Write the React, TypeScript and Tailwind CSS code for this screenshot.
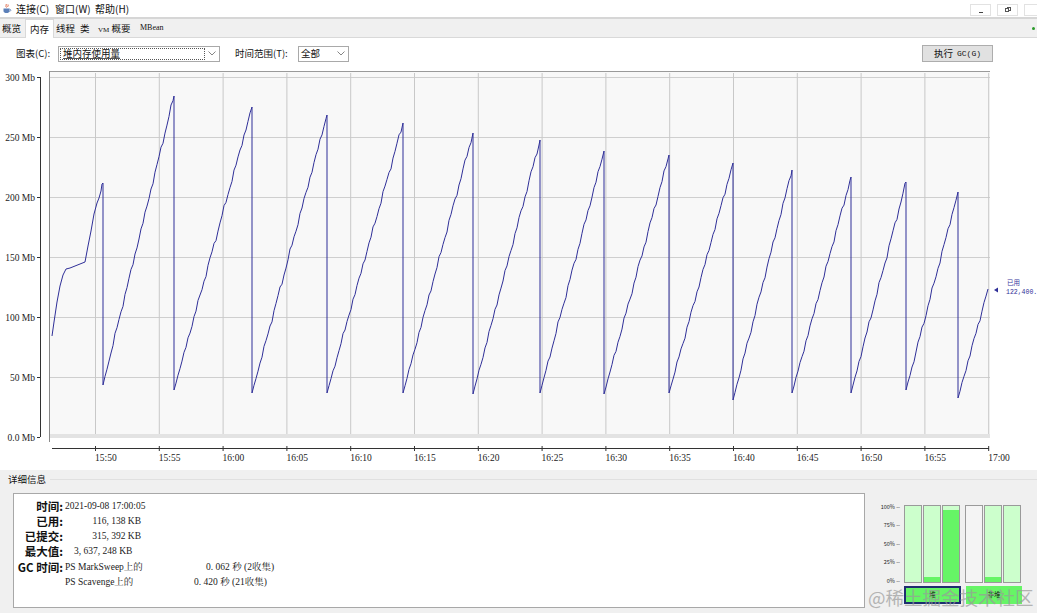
import React from "react";

const cjk = "font-['Noto_Sans_CJK_SC',sans-serif]";
const serif = "font-['Liberation_Serif','Noto_Serif_CJK_SC',serif]";

// chart geometry (page coordinates, svg viewBox starts at y=68)
const GRID_X0 = 95;
const GRID_DX = 63.8;
const times = ["15:50", "15:55", "16:00", "16:05", "16:10", "16:15", "16:20", "16:25", "16:30", "16:35", "16:40", "16:45", "16:50", "16:55", "17:00"];
const yLabels = ["300 Mb", "250 Mb", "200 Mb", "150 Mb", "100 Mb", "50 Mb", "0.0 Mb"];

const firstRise: [number, number][] = [
    [52, 336], [54, 322], [57, 302], [60, 286], [63, 275], [66, 269], [70, 268], [75, 266], [80, 264], [85, 262],
    [88, 246], [91, 231], [94, 214], [97, 203], [99, 198], [101, 191], [102, 184], [103, 183],
];

// [xStart, yLow, xEnd, yPeak]
const cycles = [
    [103, 385, 174, 96],
    [174, 390, 252, 107],
    [252, 393, 327, 115],
    [327, 393, 403, 123],
    [403, 393, 473, 133],
    [473, 394, 540, 140],
    [540, 393, 604, 151],
    [604, 394, 669, 155],
    [669, 393, 733, 163],
    [733, 400, 792, 170],
    [792, 393, 851, 177],
    [851, 393, 906, 182],
    [906, 390, 958, 192],
    [958, 398, 988, 289],
];

function buildPath() {
    const pts: [number, number][] = [...firstRise];
    for (const [xs, yl, xe, yp] of cycles) {
        pts.push([xs, yl]);
        for (let x = xs + 2; x < xe; x += 2) {
            const t = (x - xs) / (xe - xs);
            const n = 1.6 * Math.sin(x * 1.9) + 1.1 * Math.sin(x * 0.47) + 0.6 * Math.sin(x * 3.7);
            pts.push([x, yl - (yl - yp) * t + n * Math.min(1, t * 6)]);
        }
        pts.push([xe, yp]);
    }
    return pts.map(([x, y], i) => `${i === 0 ? "M" : "L"}${x} ${y.toFixed(1)}`).join(" ");
}

function MemoryChart() {
    const path = buildPath();
    return (
        <svg width={1037} height={402} viewBox="0 68 1037 402" className="block">
            {/* plot area */}
            <rect x={49} y={71} width={941} height={367} fill="#f8f8f8" />
            {yLabels.map((_, i) => (
                <line key={i} x1={50} x2={990} y1={77.5 + i * 60} y2={77.5 + i * 60} stroke="#cfcfcf" />
            ))}
            {times.map((_, i) => (
                <line key={i} x1={GRID_X0 + i * GRID_DX + 0.5} x2={GRID_X0 + i * GRID_DX + 0.5} y1={73} y2={437} stroke="#c8c8c8" />
            ))}
            <rect x={50} y={434} width={940} height={4} fill="#e3e3e3" />
            <line x1={49} x2={990} y1={71.5} y2={71.5} stroke="#9a9a9a" />
            <line x1={49.5} x2={49.5} y1={71} y2={442} stroke="#8a8a8a" />

            {/* y axis */}
            <line x1={40.5} x2={40.5} y1={77} y2={437} stroke="#333" />
            {yLabels.map((l, i) => (
                <g key={l}>
                    <line x1={37} x2={40} y1={77.5 + i * 60} y2={77.5 + i * 60} stroke="#333" />
                    <text x={35} y={80.5 + i * 60} textAnchor="end" fontSize={9.5} fill="#222" fontFamily="'Liberation Serif', serif">
                        {l}
                    </text>
                </g>
            ))}

            {/* x axis */}
            <line x1={52} x2={989} y1={448.5} y2={448.5} stroke="#333" />
            {times.map((t, i) => (
                <g key={t}>
                    <line x1={GRID_X0 + i * GRID_DX + 0.5} x2={GRID_X0 + i * GRID_DX + 0.5} y1={446} y2={451} stroke="#333" />
                    <text x={GRID_X0 + i * GRID_DX} y={461} fontSize={9.5} fill="#222" fontFamily="'Liberation Serif', serif">
                        {t}
                    </text>
                </g>
            ))}

            {/* data */}
            <path d={path} fill="none" stroke="#2f2f98" strokeWidth={1} strokeLinejoin="round" />

            {/* current value marker */}
            <polygon points="994,290 998,287.5 998,292.5" fill="#2f2f98" />
            <text x={1007} y={285} fontSize={6.5} fill="#3a3aa0" fontFamily="'Noto Sans CJK SC', sans-serif">
                已用
            </text>
            <text x={1006} y={294} fontSize={6.5} fill="#2f2f98" fontFamily="'Liberation Mono', monospace">
                122,400.
            </text>
        </svg>
    );
}

function JavaIcon() {
    return (
        <svg width="10" height="11" viewBox="0 0 10 11">
            <path d="M4 1 C5 2 3 3 4.5 4.5 M6 1.5 C7 2.5 5 3 6 4" stroke="#d9532c" strokeWidth="0.9" fill="none" />
            <path d="M1.5 5.5 H7.5 V8 C7.5 9.5 6 10 4.5 10 C3 10 1.5 9.5 1.5 8 Z" fill="#5b7fb8" />
            <path d="M7.5 6.2 C9.3 6.2 9.3 8.3 7.3 8.3" stroke="#5b7fb8" strokeWidth="0.8" fill="none" />
        </svg>
    );
}

function MenuBar() {
    return (
        <div className={`h-[17px] flex items-center bg-white text-[10px] text-[#111] ${cjk}`}>
            <div className="w-[16px] pl-[2px] flex items-center">
                <JavaIcon />
            </div>
            <span className="w-[39px]">连接(C)</span>
            <span className="w-[40px]">窗口(W)</span>
            <span>帮助(H)</span>
            <div className="ml-auto flex items-center gap-[6px] mr-[-8px] mt-[2px]">
                <div className="w-[21px] h-[12px] border border-[#e2e2e2] flex items-end justify-center pb-[2px]">
                    <div className="w-[4px] h-[1px] bg-[#444]" />
                </div>
                <div className="w-[21px] h-[12px] border border-[#e2e2e2] flex items-center justify-center">
                    <div className="relative w-[6px] h-[5px]">
                        <div className="absolute right-0 top-0 w-[4px] h-[4px] border border-[#555]" />
                        <div className="absolute left-0 bottom-0 w-[4px] h-[4px] border border-[#555] bg-white" />
                    </div>
                </div>
                <div className="w-[21px] h-[12px] border border-[#e2e2e2]" />
            </div>
        </div>
    );
}

function TabStrip() {
    const tabs = [
        { label: "概览", w: "w-[25px]", pl: "pl-[2px]" },
        { label: "内存", w: "w-[29px]", pl: "pl-[4px]", active: true },
        { label: "线程", w: "w-[26px]", pl: "pl-[2px]" },
        { label: "类", w: "w-[18px]", pl: "pl-[0px]" },
        { label: "VM 概要", w: "w-[41px]", pl: "pl-[0px]" },
        { label: "MBean", w: "w-[34px]", pl: "pl-[1px]" },
    ];
    return (
        <div className="border-t-2 border-[#d6d6d6]">
            <div className={`h-[19px] flex items-end bg-[#f0f0f0] border-b border-[#d9d9d9] text-[9.5px] text-[#111] ${cjk} relative`}>
                {tabs.map((t) => (
                    <div
                        key={t.label}
                        className={`${t.w} ${t.pl} h-[18px] flex items-center ${t.active ? "bg-white border border-b-0 border-[#d9d9d9] mb-[-1px] h-[19px]" : ""}`}
                    >
                        {t.label === "VM 概要" ? (
                            <span>
                                <span className="text-[7px] font-['Liberation_Serif',serif]">VM</span> 概要
                            </span>
                        ) : t.label === "MBean" ? (
                            <span className="text-[8px] font-['Liberation_Serif',serif]">MBean</span>
                        ) : (
                            t.label
                        )}
                    </div>
                ))}
                <div className="ml-auto mr-[2px] mb-[7px] w-[3px] h-[3px] rounded-full bg-[#2a9a2a]" />
            </div>
        </div>
    );
}

function Chevron() {
    return (
        <svg width="8" height="5" viewBox="0 0 8 5">
            <path d="M0.5 0.5 L4 4 L7.5 0.5" stroke="#777" fill="none" strokeWidth="0.9" />
        </svg>
    );
}

function Toolbar() {
    return (
        <div className={`h-[30px] flex items-center bg-white text-[9.5px] text-[#111] ${cjk} pt-[1px]`}>
            <span className="ml-[16px] w-[42px]">图表(C):</span>
            <div className="w-[162px] h-[16px] border border-[#a9a9a9] flex items-center pl-[1px]">
                <div className="w-[145px] h-[12px] border border-dotted border-[#555] flex items-center pl-[2px]">
                    <span className="underline decoration-[#555]">堆内存使用量</span>
                </div>
                <div className="ml-auto mr-[3px] flex items-center">
                    <Chevron />
                </div>
            </div>
            <span className="ml-[15px] w-[63px]">时间范围(T):</span>
            <div className="w-[51px] h-[16px] border border-[#a9a9a9] flex items-center pl-[2px]">
                <span>全部</span>
                <div className="ml-auto mr-[3px] flex items-center">
                    <Chevron />
                </div>
            </div>
            <button className="ml-auto mr-[44px] w-[71px] h-[17px] bg-[#e1e1e1] border border-[#adadad] flex items-center justify-center gap-[4px] text-[9.5px]">
                <span>执行</span>
                <span className="font-['Liberation_Mono',monospace] text-[8px]">GC(G)</span>
            </button>
        </div>
    );
}

function DetailRow({ label, children }: { label: string; children?: React.ReactNode }) {
    return (
        <div className="h-[15.2px] flex items-center">
            <div className={`w-[48px] text-right text-[11.5px] font-bold leading-none text-[#111] ${cjk}`}>{label}</div>
            <div className={`pl-[2px] flex items-center text-[9.5px] leading-none text-[#222] ${serif}`}>{children}</div>
        </div>
    );
}

function HeapBars() {
    const bars = [
        { bg: "bg-[#ccffcc]", fill: "h-[0%]" },
        { bg: "bg-[#ccffcc]", fill: "h-[6%]" },
        { bg: "bg-[#ccffcc]", fill: "h-[95%]" },
        { bg: "bg-[#f4f4f4]", fill: "h-[0%]" },
        { bg: "bg-[#ccffcc]", fill: "h-[6%]" },
        { bg: "bg-[#ccffcc]", fill: "h-[0%]" },
    ];
    const ticks = ["100%", "75%", "50%", "25%", "0%"];
    return (
        <div className="relative ml-[5px] mt-[12px] flex">
            <div className={`w-[34px] h-[79px] flex flex-col justify-between text-[5.5px] text-[#222] ${cjk}`}>
                {ticks.map((t) => (
                    <div key={t} className="flex justify-end pr-[4px] leading-none">
                        {t} --
                    </div>
                ))}
            </div>
            <div className="flex flex-col">
                <div className="flex h-[78px]">
                    {bars.map((b, i) => (
                        <div
                            key={i}
                            className={`w-[18px] h-full border border-[#9a9a9a] ${b.bg} flex flex-col justify-end ${i === 1 || i === 2 || i === 4 || i === 5 ? "ml-[1px]" : ""} ${i === 3 ? "ml-[5px]" : ""}`}
                        >
                            <div className={`${b.fill} w-full bg-[#66f566]`} />
                        </div>
                    ))}
                </div>
                <div className={`flex mt-[3px] text-[6.5px] text-[#111] ${cjk}`}>
                    <div className="w-[57px] h-[18px] bg-[#66f566] border-2 border-[#1f2f6f] flex items-center justify-center">堆</div>
                    <div className="w-[56px] h-[18px] ml-[5px] bg-[#66f566] flex items-center justify-center">非堆</div>
                </div>
            </div>
            <div className={`absolute left-[-2px] top-[79px] text-[18.5px] whitespace-nowrap text-[#9a9a9a] opacity-70 ${cjk} pointer-events-none`}>
                @稀土掘金技术社区
            </div>
        </div>
    );
}

function Details() {
    return (
        <div className="h-[143px] bg-[#f0f0f0]">
            <div className="h-[16px] flex items-center pl-[8px] pt-[2px]">
                <span className={`text-[9.5px] text-[#111] ${cjk}`}>详细信息</span>
                <div className="flex-1 ml-[4px] h-px bg-[#e0e0e0]" />
            </div>
            <div className="flex mt-[7px]">
                <div className="ml-[13px] w-[852px] h-[115px] bg-white border border-[#a8a8a8] pt-[5px] pl-px">
                    <DetailRow label="时间:">2021-09-08 17:00:05</DetailRow>
                    <DetailRow label="已用:">
                        <span className="w-[76px] text-right">116, 138 KB</span>
                    </DetailRow>
                    <DetailRow label="已提交:">
                        <span className="w-[76px] text-right">315, 392 KB</span>
                    </DetailRow>
                    <DetailRow label="最大值:">
                        <span className="ml-[9px]">3, 637, 248 KB</span>
                    </DetailRow>
                    <DetailRow label="GC 时间:">
                        <span className="w-[141px]">PS MarkSweep上的</span>
                        <span>0. 062 秒 (2收集)</span>
                    </DetailRow>
                    <DetailRow label="">
                        <span className="w-[129px]">PS Scavenge上的</span>
                        <span>0. 420 秒 (21收集)</span>
                    </DetailRow>
                </div>
                <HeapBars />
            </div>
        </div>
    );
}

export default function App() {
    return (
        <div className="w-[1037px] h-[613px] overflow-hidden bg-white">
            <MenuBar />
            <TabStrip />
            <Toolbar />
            <MemoryChart />
            <Details />
        </div>
    );
}
